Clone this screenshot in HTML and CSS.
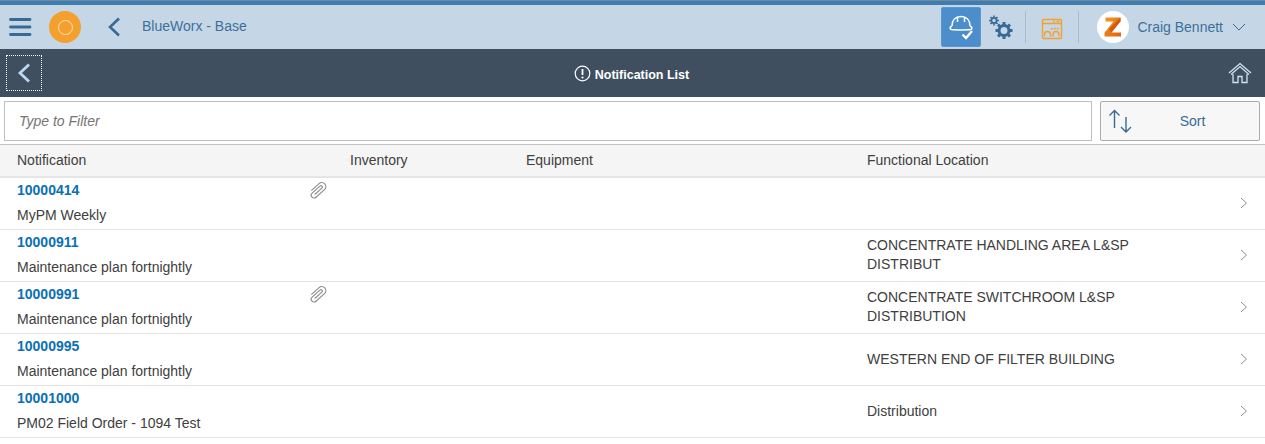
FILE: index.html
```html
<!DOCTYPE html>
<html lang="en">
<head>
<meta charset="utf-8">
<title>Notification List</title>
<link rel="stylesheet" href="styles.css">
</head>
<body>
<svg class="defs" width="0" height="0" aria-hidden="true">
  <symbol id="clip" viewBox="0 0 18 18"><g transform="translate(9 9) rotate(-42) scale(.95)" fill="none" stroke="#8d8d8d" stroke-width="1.200"><path d="M-5 .5H5a1.500 1.500 0 0 0 0-3H-6a3 3 0 0 0 0 6H6a4.250 4.250 0 0 0 0-8.500H-5"/></g></symbol>
  <symbol id="chev" viewBox="0 0 8 12"><path d="M1 1l5.500 5L1 11" stroke="#8e8e8e" fill="none"/></symbol>
  <linearGradient id="zfill" x1="0" y1="0" x2="1" y2="1"><stop offset="0" stop-color="#f39a1c"/><stop offset="1" stop-color="#e25f10"/></linearGradient>
</svg>

<header class="shell">
  <div class="shell-left">
    <button class="bare menu-btn" aria-label="Menu">
      <svg width="24" height="20" viewBox="0 0 24 20"><path d="M1.500 2.500h19.500M1.500 10h19.500M1.500 17.500h19.500" stroke="#376a95" stroke-width="2.800" stroke-linecap="round" fill="none"/></svg>
    </button>
    <span class="logo"><span class="logo-ring"></span></span>
    <button class="bare shell-back" aria-label="Back">
      <svg width="14" height="20" viewBox="0 0 14 20"><path d="M12 1.500 3 10l9 8.500" stroke="#376a95" stroke-width="2.600" fill="none"/></svg>
    </button>
    <span class="shell-title">BlueWorx - Base</span>
  </div>
  <div class="shell-right">
    <button class="bare tool tool-active" aria-label="Work">
      <svg width="30" height="30" viewBox="0 0 30 30" fill="none" stroke="#fff" stroke-width="1.500"><path d="M6 14C6 8 9.500 4.500 15 4.500S24 8 24 14M6 14c-2.500 1-2.500 3.200-.5 3.600 3 .5 16 .5 19 0 2-.4 2-2.600-.5-3.600M11.500 5v5M18.500 5v5"/><path d="M16.500 22.500l3.500 3.500 6-7" stroke-width="2.300"/></svg>
    </button>
    <button class="bare tool" aria-label="Settings">
      <svg width="26" height="26" viewBox="0 0 26 26" fill="none" stroke="#376a95"><circle cx="6" cy="6.500" r="2.600" stroke-width="1.800"/><path d="M6 1.500v1.800M6 9.700v1.800M1 6.500h1.800M9.200 6.500H11M2.500 3l1.200 1.200M8.300 8.800 9.500 10M2.500 10l1.200-1.200M8.300 4.200 9.500 3" stroke-width="1.600"/><circle cx="16" cy="16.500" r="5" stroke-width="3"/><path d="M16 8v3M16 22v3M7.500 16.500h3M21.500 16.500h3M10 10.500l2 2M20 20.500l2 2M10 22.500l2-2M20 12.500l2-2" stroke-width="3"/></svg>
    </button>
    <span class="divider"></span>
    <button class="bare tool" aria-label="Dashboard">
      <svg width="22" height="26" viewBox="0 0 22 26" fill="none" stroke="#f3a02e" stroke-width="1.400"><rect x="1.500" y="5.500" width="19" height="19" rx="1"/><path d="M1.500 9.500h19M12 7.500h2M15.500 7.500h3M3.500 22.500v-2a3 3 0 0 1 6 0v2M12 22.500v-2a3 3 0 0 1 6 0v2M10 15.500l1.500-1.500M13 15.500l1.500-1.500M16 15.500l1.500-1.500"/></svg>
    </button>
    <span class="divider divider-second"></span>
    <span class="avatar">
      <svg width="20" height="22" viewBox="0 0 20 22"><path d="M2.500 1.500h15v3.800L8.500 16.500h9.500v4H1.500v-3.800L10.500 5.500h-8z" fill="url(#zfill)"/><path d="M17.500 1.500v3.800L8.500 16.500 6 13z" fill="#d4590e"/></svg>
    </span>
    <span class="user">Craig Bennett</span>
    <svg class="user-caret" width="14" height="8" viewBox="0 0 14 8"><path d="M1 1l6 6 6-6" stroke="#376a95" stroke-width="1" fill="none"/></svg>
  </div>
</header>

<div class="page-bar">
  <button class="page-back" aria-label="Back">
    <svg width="14" height="20" viewBox="0 0 14 20"><path d="M12 1.500 3 10l9 8.500" stroke="#bcd7ef" stroke-width="2.800" fill="none"/></svg>
  </button>
  <div class="page-title">
    <svg width="17" height="17" viewBox="0 0 17 17" fill="none"><circle cx="8.500" cy="8.500" r="7.300" stroke="#fff" stroke-width="1.200"/><path d="M8.500 4v6" stroke="#fff" stroke-width="1.800"/><circle cx="8.500" cy="12.500" r="1.100" fill="#fff"/></svg>
    <span class="page-title-text">Notification List</span>
  </div>
  <button class="bare page-home" aria-label="Home">
    <svg width="24" height="22" viewBox="0 0 24 22" fill="none" stroke="#cfe2f3" stroke-width="1.300"><path d="M1 11 12 1.500 23 11M3 12.500 12 4.500l9 8M5 12v8.500h5v-6h4v6h5V12"/></svg>
  </button>
</div>

<div class="toolbar">
  <div class="filter">Type to Filter</div>
  <button class="sort">
    <svg class="sort-icon" width="24" height="24" viewBox="0 0 24 24" fill="none" stroke="#376a95" stroke-width="1.400"><path d="M6.500 19V1.500M1.500 6.500l5-5 5 5M18 8v15M13 18l5 5 5-5"/></svg>
    <span class="sort-label">Sort</span>
  </button>
</div>

<div class="table-head row-grid">
  <span>Notification</span>
  <span>Inventory</span>
  <span>Equipment</span>
  <span>Functional Location</span>
</div>

<main class="rows">
  <div class="row row-grid">
    <div class="cell-main"><a class="num">10000414</a><span class="desc">MyPM Weekly</span><svg class="clip" width="18" height="18"><use href="#clip"/></svg></div>
    <span></span><span></span><span class="loc"></span>
    <svg class="chev" width="8" height="12"><use href="#chev"/></svg>
  </div>
  <div class="row row-grid">
    <div class="cell-main"><a class="num">10000911</a><span class="desc">Maintenance plan fortnightly</span></div>
    <span></span><span></span><span class="loc">CONCENTRATE HANDLING AREA L&amp;SP DISTRIBUT</span>
    <svg class="chev" width="8" height="12"><use href="#chev"/></svg>
  </div>
  <div class="row row-grid">
    <div class="cell-main"><a class="num">10000991</a><span class="desc">Maintenance plan fortnightly</span><svg class="clip" width="18" height="18"><use href="#clip"/></svg></div>
    <span></span><span></span><span class="loc">CONCENTRATE SWITCHROOM L&amp;SP DISTRIBUTION</span>
    <svg class="chev" width="8" height="12"><use href="#chev"/></svg>
  </div>
  <div class="row row-grid">
    <div class="cell-main"><a class="num">10000995</a><span class="desc">Maintenance plan fortnightly</span></div>
    <span></span><span></span><span class="loc">WESTERN END OF FILTER BUILDING</span>
    <svg class="chev" width="8" height="12"><use href="#chev"/></svg>
  </div>
  <div class="row row-grid">
    <div class="cell-main"><a class="num">10001000</a><span class="desc">PM02 Field Order - 1094 Test</span></div>
    <span></span><span></span><span class="loc">Distribution</span>
    <svg class="chev" width="8" height="12"><use href="#chev"/></svg>
  </div>
</main>
</body>
</html>
```

FILE: styles.css
```css
* { box-sizing: border-box; }
html, body { margin: 0; padding: 0; height: 444px; overflow: hidden; background: #fff; }
body { font-family: "Liberation Sans", Arial, sans-serif; font-size: 14px; color: #404040; }
button { font: inherit; padding: 0; margin: 0; cursor: pointer; }
.defs { position: absolute; }
.bare { background: none; border: 0; display: flex; align-items: center; justify-content: center; }

.shell {
  height: 49px;
  background: #c5d7e7;
  border-top: 5px solid;
  border-image: linear-gradient(#6e8aa1 0 1px, #3f7cb0 1px) 5;
  display: flex;
  justify-content: space-between;
  align-items: center;
}
.shell-left, .shell-right { display: flex; align-items: center; }
.menu-btn { width: 24px; margin-left: 9px; }
.logo {
  width: 32px; height: 32px; margin-left: 16px; border-radius: 50%;
  background: #f3a02e; display: flex; align-items: center; justify-content: center;
}
.logo-ring { width: 15px; height: 15px; border: 1.500px solid #fde3b8; border-radius: 50%; }
.shell-back { width: 14px; margin-left: 26px; }
.shell-title { margin-left: 21px; margin-bottom: 2px; font-size: 14px; color: #3f6f99; }

.tool { width: 40px; height: 40px; border-radius: 2px; }
.tool-active { background: #4b8ecb; border: 1px solid #5d97cc; }
.shell-right { padding-right: 19px; }
.divider { width: 1px; height: 32px; background: #a9bccd; margin: 0 6px 0 4px; }
.divider-second { margin: 0 18px 0 6px; }
.avatar {
  width: 32px; height: 32px; border-radius: 50%; background: #fff;
  display: flex; align-items: center; justify-content: center;
}
.user { margin-left: 8px; margin-bottom: 1px; color: #3f6f99; font-size: 14px; }
.user-caret { margin-left: 9px; }

.page-bar {
  height: 48px;
  background: #3f4f5f;
  display: grid;
  grid-template-columns: 1fr auto 1fr;
  align-items: center;
  padding: 0 6px;
}
.page-back {
  width: 36px; height: 36px; background: none;
  border: 1px dotted #fff;
  display: flex; align-items: center; justify-content: center;
}
.page-title {
  display: flex; align-items: center; gap: 4px; margin-right: 2px;
  color: #fff; font-weight: 700; font-size: 12.500px;
}
.page-title-text { padding-top: 3px; }
.page-home { width: 24px; justify-self: end; margin-right: 7px; }

.toolbar { height: 48px; padding: 4px 5px 4px 4px; display: flex; gap: 8px; background: #fff; border-bottom: 1px solid #c4c4c4; }
.filter {
  flex: 1; border: 1px solid #bfbfbf; height: 40px; line-height: 38px;
  padding-left: 14px; font-style: italic; color: #757575; font-size: 14px;
}
.sort {
  width: 160px; height: 40px; border: 1px solid #ababab; border-radius: 2px;
  background: #f7f7f7; display: flex; align-items: center; color: #376a95;
  padding-left: 7px;
}
.sort-icon { flex: none; }
.sort-label { flex: 1; text-align: center; padding-right: 6px; font-size: 14px; }

.row-grid {
  display: grid;
  grid-template-columns: 333px 176px 341px 1fr 8px;
  padding: 0 17px;
}
.table-head {
  height: 33px; background: #f5f5f5; border-bottom: 2px solid #e5e5e5;
  align-items: center; font-size: 14px; padding-bottom: 2px;
}
.row { height: 52px; border-bottom: 1px solid #e5e5e5; align-items: center; }
.cell-main { position: relative; height: 51px; display: flex; flex-direction: column; gap: 9px; padding-top: 4px; }
.num { color: #0a70b4; font-weight: 700; font-size: 14px; line-height: 16px; }
.desc { line-height: 16px; white-space: nowrap; }
.clip { position: absolute; left: 292px; top: 4px; }
.loc { max-width: 290px; line-height: 19px; margin-bottom: 1px; }
.chev { margin-bottom: 2px; }
```
